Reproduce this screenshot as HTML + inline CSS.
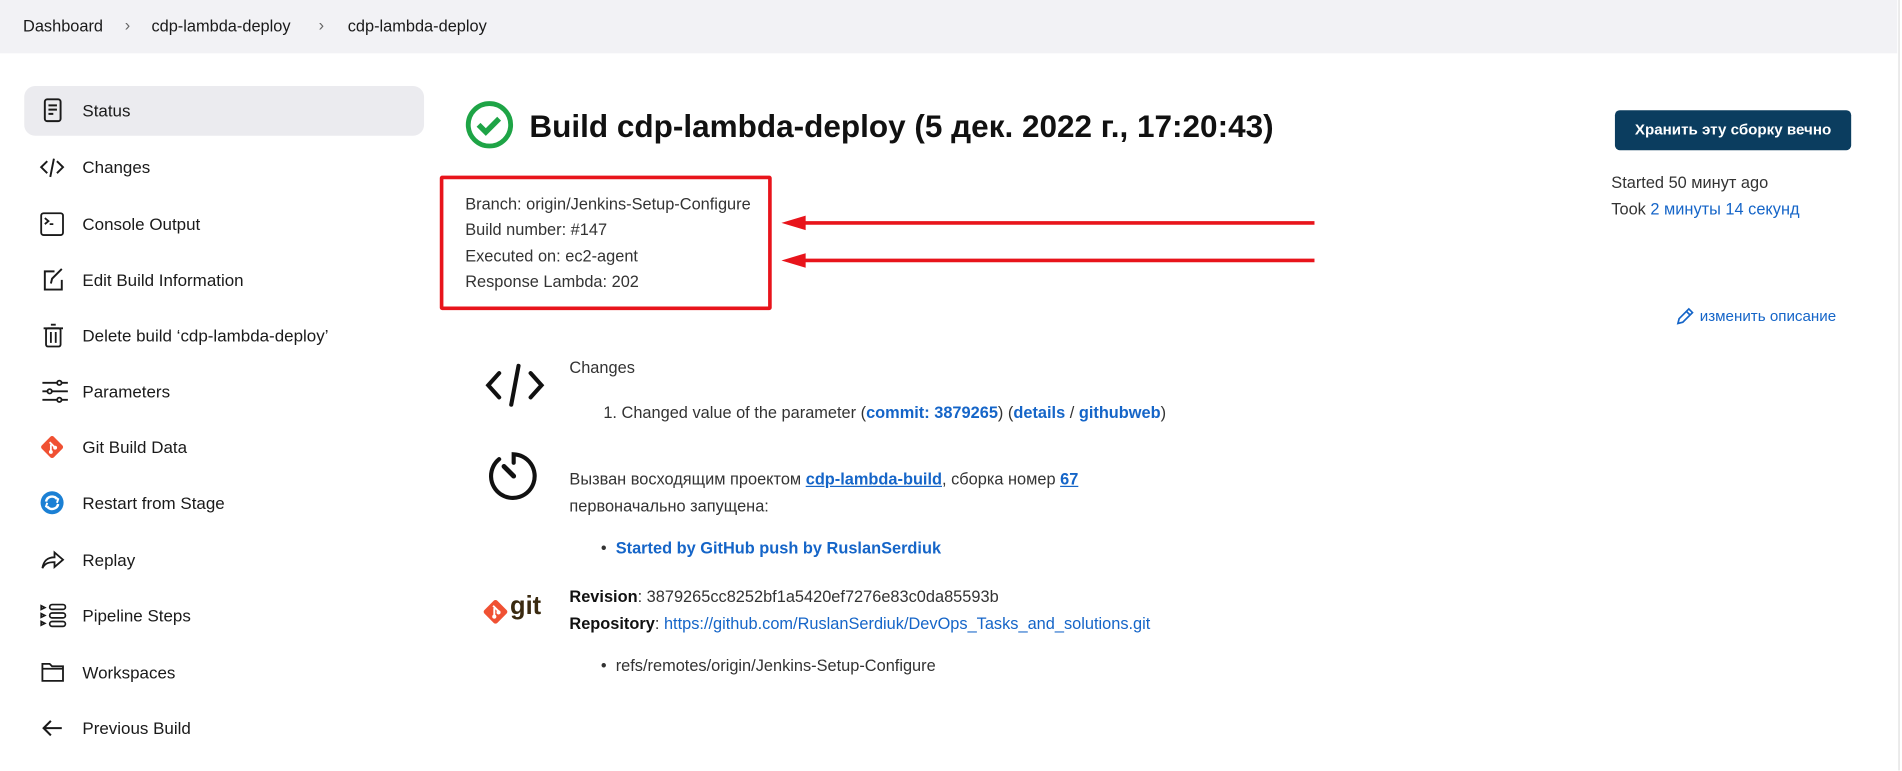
<!DOCTYPE html>
<html><head><meta charset="utf-8">
<style>
html,body{margin:0;padding:0;width:1902px;height:771px;overflow:hidden;background:#fff;}
#w{position:absolute;left:0;top:0;width:1570px;height:636px;transform:scale(1.2115);transform-origin:0 0;font-family:"Liberation Sans","DejaVu Sans",sans-serif;color:#1f1f1f;}
.a{position:absolute;white-space:nowrap;}
.t{font-size:13.5px;line-height:16px;color:#333;}
.s{font-size:14px;line-height:16px;color:#1a1a1a;}
.b{color:#1565c8;}
.bb{color:#1565c8;font-weight:bold;}
svg{position:absolute;overflow:visible;}
</style></head><body><div id="w">
<div class="a" style="left:0;top:0;width:1566px;height:44px;background:#f2f2f5"></div>
<div class="a" style="left:1567px;top:0;width:1px;height:636px;background:#ddd"></div>
<div class="a t" style="left:19px;top:14px;color:#1a1a1a">Dashboard</div>
<div class="a t" style="left:103px;top:13px;color:#666">›</div>
<div class="a t" style="left:125px;top:14px;color:#1a1a1a">cdp-lambda-deploy</div>
<div class="a t" style="left:263px;top:13px;color:#666">›</div>
<div class="a t" style="left:287px;top:14px;color:#1a1a1a">cdp-lambda-deploy</div>

<div class="a" style="left:20px;top:71px;width:330px;height:41px;background:#ebebef;border-radius:9px"></div>
<svg width="20" height="20" style="left:34px;top:81px" fill="none" stroke="#1a1a1a" stroke-width="1.6"><rect x="3" y="1" width="13" height="18" rx="2"/><path d="M6 6h7M6 9.5h7M6 13h4"/></svg>
<svg width="20" height="20" style="left:33px;top:128px" fill="none" stroke="#1a1a1a" stroke-width="1.6"><path d="M6 5L1 10l5 5M14 5l5 5-5 5M11.5 3l-3 15"/></svg>
<svg width="20" height="20" style="left:33px;top:175px" fill="none" stroke="#1a1a1a" stroke-width="1.5"><rect x="1" y="1" width="18" height="18" rx="2"/><path d="M4 5l3 2.5-3 2.5M8 10h3"/></svg>
<svg width="20" height="20" style="left:34px;top:221px" fill="none" stroke="#1a1a1a" stroke-width="1.6"><path d="M11 3H3v15h14v-8"/><path d="M8 13l1-4 8-8M17 1l-1 1"/></svg>
<svg width="20" height="20" style="left:35px;top:267px" fill="none" stroke="#1a1a1a" stroke-width="1.5"><path d="M1 4h16M7 1h4M7 7v9M11 7v9"/><rect x="3" y="4" width="12" height="15" rx="1.5"/></svg>
<svg width="24" height="20" style="left:34px;top:313px" fill="none" stroke="#1a1a1a" stroke-width="1.5"><path d="M1 3h21M1 10h21M1 17h21"/><circle cx="15" cy="3" r="1.8" fill="#fff"/><circle cx="7" cy="10" r="1.8" fill="#fff"/><circle cx="15" cy="17" r="1.8" fill="#fff"/></svg>
<svg width="20" height="20" style="left:33px;top:359px"><rect x="3" y="3" width="14" height="14" rx="2" transform="rotate(45 10 10)" fill="#f05133"/><path d="M8 6l5 5M9 8v6" stroke="#fff" stroke-width="1.5"/><circle cx="9" cy="14" r="1.6" fill="#fff"/><circle cx="12.5" cy="10.5" r="1.6" fill="#fff"/></svg>
<svg width="20" height="20" style="left:33px;top:405px"><circle cx="10" cy="10" r="9.5" fill="#1b80d4"/><path d="M5 9a5 5 0 0 1 9-2M15 11a5 5 0 0 1-9 2" stroke="#fff" stroke-width="2" fill="none"/><path d="M12 5l3 2-1 3M8 15l-3-2 1-3" stroke="#fff" stroke-width="1.6" fill="none"/></svg>
<svg width="20" height="20" style="left:34px;top:452px" fill="none" stroke="#1a1a1a" stroke-width="1.5"><path d="M1 17c1-6 4-9 10-9V4l7 6-7 6v-4c-5 0-8 1-10 5z"/></svg>
<svg width="22" height="20" style="left:33px;top:498px" fill="none" stroke="#1a1a1a" stroke-width="1.4"><path d="M1 2l3 1.5-3 1.5zM1 8.5l3 1.5-3 1.5zM1 15l3 1.5-3 1.5z"/><rect x="8" y="1" width="13" height="4" rx="2"/><rect x="8" y="8" width="13" height="4" rx="2"/><rect x="8" y="15" width="13" height="4" rx="2"/></svg>
<svg width="20" height="20" style="left:34px;top:545px" fill="none" stroke="#1a1a1a" stroke-width="1.5"><path d="M1 3h6l2 2h9v12H1z M1 7h17"/></svg>
<svg width="20" height="20" style="left:34px;top:591px" fill="none" stroke="#1a1a1a" stroke-width="1.7"><path d="M17 10H3M8 4l-6 6 6 6"/></svg>

<div class="a s" style="left:68px;top:83px">Status</div>
<div class="a s" style="left:68px;top:130px">Changes</div>
<div class="a s" style="left:68px;top:177px">Console Output</div>
<div class="a s" style="left:68px;top:223px">Edit Build Information</div>
<div class="a s" style="left:68px;top:269px">Delete build ‘cdp-lambda-deploy’</div>
<div class="a s" style="left:68px;top:315px">Parameters</div>
<div class="a s" style="left:68px;top:361px">Git Build Data</div>
<div class="a s" style="left:68px;top:407px">Restart from Stage</div>
<div class="a s" style="left:68px;top:454px">Replay</div>
<div class="a s" style="left:68px;top:500px">Pipeline Steps</div>
<div class="a s" style="left:68px;top:547px">Workspaces</div>
<div class="a s" style="left:68px;top:593px">Previous Build</div>

<svg width="40" height="40" style="left:384px;top:83px"><circle cx="20" cy="20" r="17.5" fill="none" stroke="#1ea446" stroke-width="4"/><path d="M11 20l6 6 11-11" fill="none" stroke="#1ea446" stroke-width="4.5"/></svg>
<div class="a" style="left:437px;top:88px;font-size:26px;line-height:32px;font-weight:bold;color:#111">Build cdp-lambda-deploy (5 дек. 2022 г., 17:20:43)</div>

<div class="a" style="left:363px;top:145px;width:268px;height:105px;border:3px solid #e8141b;border-radius:2px"></div>
<div class="a t" style="left:384px;top:161px">Branch: origin/Jenkins-Setup-Configure</div>
<div class="a t" style="left:384px;top:182px">Build number: #147</div>
<div class="a t" style="left:384px;top:204px">Executed on: ec2-agent</div>
<div class="a t" style="left:384px;top:225px">Response Lambda: 202</div>

<svg width="450" height="50" style="left:643px;top:172px"><path d="M15 12H442M15 43H442" stroke="#e8141b" stroke-width="3"/><path d="M2 12l20-6v12zM2 43l20-6v12z" fill="#e8141b"/></svg>

<div class="a" style="left:1333px;top:91px;width:195px;height:33px;background:#0b3d5f;border-radius:4px;color:#fff;font-weight:bold;font-size:12.5px;line-height:33px;text-align:center">Хранить эту сборку вечно</div>
<div class="a t" style="left:1330px;top:143px">Started 50 минут ago</div>
<div class="a t" style="left:1330px;top:165px">Took <span class="b">2 минуты 14 секунд</span></div>
<svg width="14" height="14" style="left:1384px;top:254px" fill="none" stroke="#1565c8" stroke-width="1.4"><path d="M1 13l1-4 8-8 3 3-8 8z M8 3l3 3"/></svg>
<div class="a" style="left:1403px;top:254px;font-size:12.5px;line-height:15px;color:#1565c8">изменить описание</div>

<svg width="48" height="36" style="left:401px;top:300px" fill="none" stroke="#111" stroke-width="3.4" stroke-linecap="round"><path d="M11 8L2 18l9 10M37 8l9 10-9 10M27 2l-6 32"/></svg>
<div class="a t" style="left:470px;top:296px">Changes</div>
<div class="a t" style="left:498px;top:333px">1. Changed value of the parameter (<span class="bb">commit: 3879265</span>) (<span class="bb">details</span> / <span class="bb">githubweb</span>)</div>

<svg width="44" height="44" style="left:403px;top:371px" fill="none" stroke="#111" stroke-width="3.4" stroke-linecap="round"><path d="M9 8A18 18 0 1 0 21 4v7"/><path d="M13 14l8 8" stroke-width="4"/></svg>
<div class="a t" style="left:470px;top:388px">Вызван восходящим проектом <span class="b" style="text-decoration:underline;font-weight:bold">cdp-lambda-build</span>, сборка номер <span class="b" style="text-decoration:underline;font-weight:bold">67</span></div>
<div class="a t" style="left:470px;top:410px">первоначально запущена:</div>
<div class="a t" style="left:496px;top:445px">•&nbsp;&nbsp;<span class="bb">Started by GitHub push by RuslanSerdiuk</span></div>

<svg width="22" height="22" style="left:398px;top:494px"><rect x="3.5" y="3.5" width="15" height="15" rx="2" transform="rotate(45 11 11)" fill="#f05133"/><path d="M9 6l5 5M10 8v7" stroke="#fff" stroke-width="1.6"/><circle cx="10" cy="15" r="1.7" fill="#fff"/><circle cx="13.5" cy="11.5" r="1.7" fill="#fff"/></svg>
<div class="a" style="left:421px;top:490px;font-size:21px;font-weight:bold;color:#3a2a10;line-height:22px">git</div>
<div class="a t" style="left:470px;top:485px"><b style="color:#111">Revision</b>: 3879265cc8252bf1a5420ef7276e83c0da85593b</div>
<div class="a t" style="left:470px;top:507px"><b style="color:#111">Repository</b>: <span class="b">https://github.com/RuslanSerdiuk/DevOps_Tasks_and_solutions.git</span></div>
<div class="a t" style="left:496px;top:542px">•&nbsp;&nbsp;refs/remotes/origin/Jenkins-Setup-Configure</div>
</div></body></html>
